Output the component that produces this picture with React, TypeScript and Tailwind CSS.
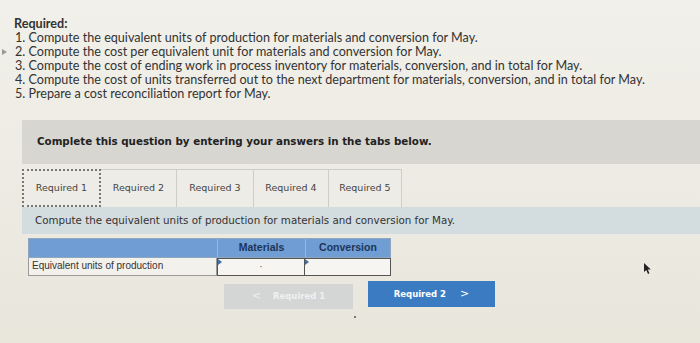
import React from "react";

const tabs = ["Required 1", "Required 2", "Required 3", "Required 4", "Required 5"];
const tabWidths = ["w-[79px]", "w-[76px]", "w-[77px]", "w-[75px]", "w-[73px]"];

const App = () => {
  return (
    <div className="relative w-[700px] h-[343px] overflow-hidden bg-gradient-to-b from-[#f1f0ea] to-[#e9e6dc] text-[#333]">
      {/* Instrucciones */}
      <div className="relative pt-[17px] pl-[14px] font-['Lato',sans-serif] text-[12.6px] leading-[14px]">
        <p className="font-bold">Required:</p>
        <ol className="pl-[1px]">
          <li>1. Compute the equivalent units of production for materials and conversion for May.</li>
          <li>2. Compute the cost per equivalent unit for materials and conversion for May.</li>
          <li>3. Compute the cost of ending work in process inventory for materials, conversion, and in total for May.</li>
          <li>4. Compute the cost of units transferred out to the next department for materials, conversion, and in total for May.</li>
          <li>5. Prepare a cost reconciliation report for May.</li>
        </ol>
        <span className="absolute left-[2px] top-[49px] w-0 h-0 border-y-[3px] border-y-transparent border-l-[5px] border-l-[#9a9a9a]" />
      </div>

      <div className="ml-[22px] mt-[19px] font-['DejaVu_Sans',sans-serif]">
        <div className="h-[44px] bg-[#d7d6d1] flex items-center pl-[15px] text-[10.3px] font-bold text-[#222]">
          Complete this question by entering your answers in the tabs below.
        </div>

        {/* Pestañas */}
        <div className="flex mt-[5px] h-[38px]">
          {tabs.map((t, i) => (
            <div
              key={t}
              className={`${tabWidths[i]} flex items-center justify-center text-[9.5px] text-[#444] bg-[#eeece6] ${
                i === 0
                  ? "border-[2px] border-dotted border-[#777]"
                  : "border-r border-t border-[#cfcdc7]"
              }`}
            >
              {t}
            </div>
          ))}
        </div>

        <div className="h-[27px] bg-[#d3dcdf] flex items-center pl-[13px] text-[10.3px] text-[#333]">
          Compute the equivalent units of production for materials and conversion for May.
        </div>

        {/* Tabla */}
        <div className="ml-[6px] mt-[4px] w-[363px] font-['Liberation_Sans',sans-serif]">
          <div className="flex h-[20px] items-stretch bg-[#6f9dd4] border border-[#8fa6bf] text-[10.5px] font-bold text-[#1d3557]">
            <div className="w-[189px] border-r border-[#9fb6cf]" />
            <div className="w-[88px] border-r border-[#9fb6cf] flex items-center justify-center">Materials</div>
            <div className="flex-1 flex items-center justify-center">Conversion</div>
          </div>
          <div className="flex h-[18px] text-[10px] leading-[16px]">
            <div className="w-[189px] border border-t-0 border-[#9a9a9a] bg-[#f3f1ec] pl-[3px] text-[#333]">
              Equivalent units of production
            </div>
            <div className="relative w-[88px] border border-[#555] bg-[#f6f5f1] text-center">
              <span className="absolute left-0 top-0 w-0 h-0 border-y-[3px] border-y-transparent border-l-[4px] border-l-[#3f6ea8]" />
              <span className="text-[#555]">·</span>
            </div>
            <div className="relative flex-1 border border-l-0 border-[#555] bg-[#f6f5f1]">
              <span className="absolute left-0 top-0 w-0 h-0 border-y-[3px] border-y-transparent border-l-[4px] border-l-[#3f6ea8]" />
            </div>
          </div>
        </div>

        {/* Botones */}
        <div className="flex items-start ml-[202px] mt-[5px] gap-[15px] text-[8.5px] font-bold">
          <div className="w-[129px] h-[25px] mt-[3px] bg-[#d4d6d6] flex items-center justify-center gap-[12px] text-[#eef0f2]">
            <span className="text-[11px] font-normal">&lt;</span>
            <span>Required 1</span>
          </div>
          <div className="w-[127px] h-[26px] bg-[#3a7bc2] flex items-center justify-center gap-[14px] text-white">
            <span>Required 2</span>
            <span className="text-[11px] font-normal">&gt;</span>
          </div>
        </div>
      </div>

      <span className="absolute left-[354px] top-[316px] w-[2px] h-[2px] bg-[#555] rounded-full" />

      {/* Cursor */}
      <svg className="absolute left-[643px] top-[262px]" width="9" height="13" viewBox="0 0 9 13">
        <path d="M1 1 L1 10 L3.3 8 L5 12 L6.4 11.3 L4.8 7.6 L7.8 7.5 Z" fill="#222" />
      </svg>
    </div>
  );
};

export default App;
